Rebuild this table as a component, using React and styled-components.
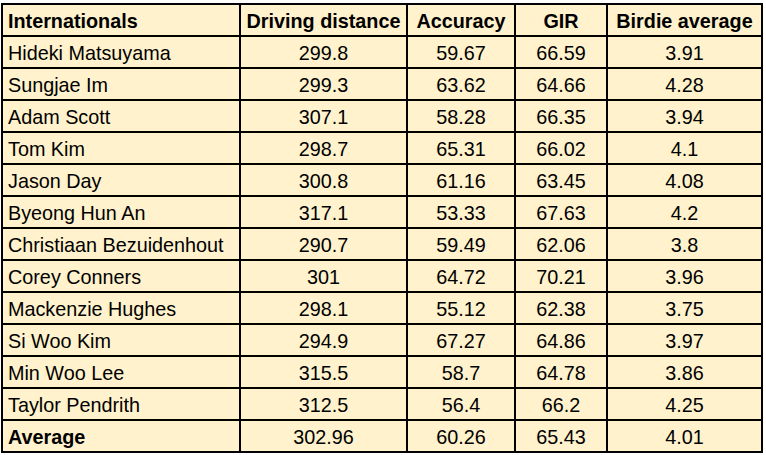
import React from 'react';
import styled, { createGlobalStyle } from 'styled-components';

const rows = [
  ['Hideki Matsuyama', '299.8', '59.67', '66.59', '3.91'],
  ['Sungjae Im', '299.3', '63.62', '64.66', '4.28'],
  ['Adam Scott', '307.1', '58.28', '66.35', '3.94'],
  ['Tom Kim', '298.7', '65.31', '66.02', '4.1'],
  ['Jason Day', '300.8', '61.16', '63.45', '4.08'],
  ['Byeong Hun An', '317.1', '53.33', '67.63', '4.2'],
  ['Christiaan Bezuidenhout', '290.7', '59.49', '62.06', '3.8'],
  ['Corey Conners', '301', '64.72', '70.21', '3.96'],
  ['Mackenzie Hughes', '298.1', '55.12', '62.38', '3.75'],
  ['Si Woo Kim', '294.9', '67.27', '64.86', '3.97'],
  ['Min Woo Lee', '315.5', '58.7', '64.78', '3.86'],
  ['Taylor Pendrith', '312.5', '56.4', '66.2', '4.25'],
];

const header = ['Internationals', 'Driving distance', 'Accuracy', 'GIR', 'Birdie average'];
const average = ['Average', '302.96', '60.26', '65.43', '4.01'];

const App = () => {
  // header row is bold everywhere, the average row only in its label
  const renderRow = (cells, bold, key) =>
    cells.map((c, i) => (
      <Cell key={key + '-' + i} $bold={bold === 'all' || (bold === 'label' && i === 0)} $left={i === 0}>
        {c}
      </Cell>
    ));

  return (
    <>
      <GlobalStyle />
      <Sheet>
        <Table>
          {renderRow(header, 'all', 'h')}
          {rows.map((r, idx) => renderRow(r, 'none', 'r' + idx))}
          {renderRow(average, 'label', 'a')}
        </Table>
      </Sheet>
    </>
  );
};

export default App;

const GlobalStyle = createGlobalStyle`
  html, body {
    margin: 0;
    padding: 0;
    background: #ffffff;
  }
  body {
    font-family: "Liberation Sans", Arial, sans-serif;
  }
`;

const Sheet = styled.div`
  padding: 3px 0 0 1px;
`;

const Table = styled.div`
  display: inline-grid;
  grid-template-columns: 236px 165px 106px 90px 153px;
  grid-auto-rows: 30px;
  gap: 2px;
  padding: 2px;
  background: #000;
`;

const Cell = styled.div`
  background: #fff2cc;
  color: #000;
  font-size: 19.8px;
  line-height: 28px;
  padding-top: 2px;
  padding-left: ${(p) => (p.$left ? '5px' : '0')};
  text-align: ${(p) => (p.$left ? 'left' : 'center')};
  font-weight: ${(p) => (p.$bold ? 700 : 400)};
  white-space: nowrap;
  overflow: hidden;
`;
